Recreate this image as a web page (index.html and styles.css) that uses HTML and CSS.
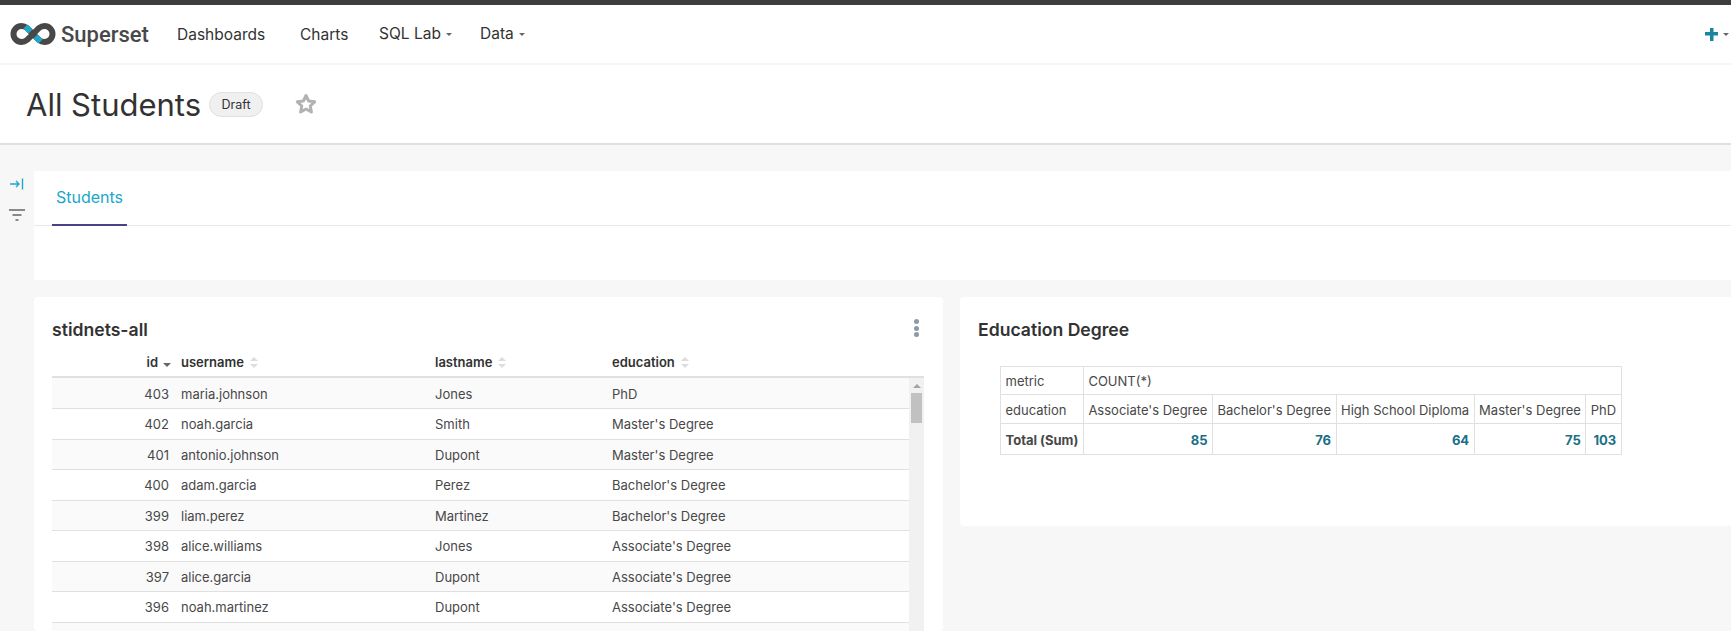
FILE: index.html
```html
<!DOCTYPE html>
<html lang="en">
<head>
    <meta charset="UTF-8">
    <title>All Students</title>
    <link rel="stylesheet" href="styles.css">
</head>
<body>
    <nav class="navbar">
        <a class="brand">
            <svg class="brand-logo" viewBox="0 0 46 24" width="46" height="24">
                <path d="M23 12L29 6Q31.500 4 34.500 4A8 8 0 0 1 34.500 20Q31.500 20 29 18L17 6Q14.500 4 11.500 4A8 8 0 0 0 11.500 20Q14.500 20 17 18Z" fill="none" stroke="#484848" stroke-width="6"/>
                <path d="M15.500 4.500L20.500 9.500M25.500 14.500L30.500 19.500" fill="none" stroke="#20a7c9" stroke-width="6"/>
            </svg>
            <span class="brand-name">Superset</span>
        </a>
        <ul class="nav-links">
            <li class="nav-dashboards">Dashboards</li>
            <li class="nav-charts">Charts</li>
            <li class="nav-sql">SQL Lab<i class="caret"></i></li>
            <li class="nav-data">Data<i class="caret"></i></li>
        </ul>
        <div class="nav-right">
            <span class="plus"></span><i class="caret"></i>
        </div>
    </nav>

    <header class="title-bar">
        <h1>All Students</h1>
        <span class="badge">Draft</span>
        <svg class="star" viewBox="0 0 24 24" width="24" height="24">
            <path d="M12 3.500l2.600 5.500 6.100.8-4.500 4.200 1.200 6-5.400-3-5.400 3 1.200-6-4.500-4.200 6.100-.8z" fill="none" stroke="#b2b2b2" stroke-width="3" stroke-linejoin="round"/>
        </svg>
    </header>

    <div class="content">
        <aside class="filter-rail">
            <svg viewBox="0 0 16 16" width="16" height="16">
                <path d="M1 8h9M7 5l3 3-3 3" fill="none" stroke="#20a7c9" stroke-width="1.400"/>
                <path d="M13.500 2.500v11" stroke="#20a7c9" stroke-width="1.400"/>
            </svg>
            <svg viewBox="0 0 16 16" width="16" height="16">
                <path d="M0 3h16M3.500 8h9M6.500 13h3" stroke="#666" stroke-width="1.400"/>
            </svg>
        </aside>

        <main class="dashboard">
            <section class="tabs-card">
                <div class="tabs">
                    <div class="tab">Students</div>
                </div>
            </section>

            <div class="chart-row">
                <section class="card card-table">
                    <div class="card-head">
                        <h2>stidnets-all</h2>
                        <div class="dots"><i></i><i></i><i></i></div>
                    </div>
                    <table class="head-table">
                        <colgroup><col class="c-id"><col class="c-user"><col class="c-last"><col></colgroup>
                        <tr>
                            <th class="num">id<i class="sort-desc"></i></th>
                            <th>username<i class="sort"></i></th>
                            <th>lastname<i class="sort"></i></th>
                            <th>education<i class="sort"></i></th>
                        </tr>
                    </table>
                    <div class="table-scroll">
                        <table class="data-table">
                            <colgroup><col class="c-id"><col class="c-user"><col class="c-last"><col></colgroup>
                            <tr><td class="num">403</td><td>maria.johnson</td><td>Jones</td><td>PhD</td></tr>
                            <tr><td class="num">402</td><td>noah.garcia</td><td>Smith</td><td>Master's Degree</td></tr>
                            <tr><td class="num">401</td><td>antonio.johnson</td><td>Dupont</td><td>Master's Degree</td></tr>
                            <tr><td class="num">400</td><td>adam.garcia</td><td>Perez</td><td>Bachelor's Degree</td></tr>
                            <tr><td class="num">399</td><td>liam.perez</td><td>Martinez</td><td>Bachelor's Degree</td></tr>
                            <tr><td class="num">398</td><td>alice.williams</td><td>Jones</td><td>Associate's Degree</td></tr>
                            <tr><td class="num">397</td><td>alice.garcia</td><td>Dupont</td><td>Associate's Degree</td></tr>
                            <tr><td class="num">396</td><td>noah.martinez</td><td>Dupont</td><td>Associate's Degree</td></tr>
                            <tr><td class="num"></td><td></td><td></td><td></td></tr>
                        </table>
                        <div class="scrollbar">
                            <i class="scroll-up"></i>
                            <div class="scroll-thumb"></div>
                        </div>
                    </div>
                </section>

                <section class="card card-pivot">
                    <h2>Education Degree</h2>
                    <table class="pivot">
                        <tr class="r-metric"><td>metric</td><td colspan="5">COUNT(*)</td></tr>
                        <tr class="r-edu">
                            <td>education</td>
                            <td>Associate's Degree</td>
                            <td>Bachelor's Degree</td>
                            <td>High School Diploma</td>
                            <td>Master's Degree</td>
                            <td>PhD</td>
                        </tr>
                        <tr class="r-total">
                            <th>Total (Sum)</th>
                            <td>85</td><td>76</td><td>64</td><td>75</td><td>103</td>
                        </tr>
                    </table>
                </section>
            </div>
        </main>
    </div>
</body>
</html>
```

FILE: styles.css
```css
* {
    box-sizing: border-box;
}
body {
    margin: 0;
    height: 631px;
    overflow: hidden;
    background-color: #f7f7f7;
    color: #323232;
    font-family: Inter, 'Noto Sans', Arial, sans-serif;
    font-size: 13px;
}
h1, h2 {
    margin: 0;
}
ul {
    list-style: none;
    margin: 0;
    padding: 0;
}

/* top nav */
.navbar {
    display: flex;
    align-items: center;
    height: 65px;
    padding-left: 10px;
    padding-right: 2px;
    background-color: white;
    border-top: 5px solid #3d3d3d;
    border-bottom: 2px solid #f5f5f5;
}
.brand {
    display: flex;
    align-items: center;
    width: 167px;
}
.brand-name {
    margin-left: 5px;
    color: #484848;
    font-family: Roboto, Arial, sans-serif;
    font-size: 22px;
    font-weight: 500;
}
.nav-links {
    display: flex;
    font-size: 15.500px;
    color: #323232;
}
.nav-links li {
    white-space: nowrap;
}
.nav-dashboards {
    width: 123px;
}
.nav-charts {
    width: 79px;
}
.nav-sql {
    width: 101px;
}
.nav-sql, .nav-data {
    position: relative;
    top: -1px;
}
.caret {
    display: inline-block;
    margin-left: 5px;
    vertical-align: middle;
    border-left: 3.500px solid transparent;
    border-right: 3.500px solid transparent;
    border-top: 3.500px solid #666;
}
.nav-right {
    display: flex;
    align-items: center;
    margin-left: auto;
}
.plus {
    width: 13px;
    height: 13px;
    background:
        linear-gradient(#1985a0, #1985a0) center / 13px 3.500px no-repeat,
        linear-gradient(#1985a0, #1985a0) center / 3.500px 13px no-repeat;
}

/* title */
.title-bar {
    display: flex;
    align-items: center;
    height: 80px;
    padding-left: 26px;
    background-color: white;
    border-bottom: 2px solid #e0e0e0;
}
.title-bar h1 {
    font-size: 31px;
    font-weight: 400;
    color: #323232;
}
.badge {
    margin-left: 8px;
    margin-top: 1px;
    padding: 3px 11.500px;
    background-color: #f0f0f0;
    border: 1px solid #e0e0e0;
    border-radius: 13px;
    font-size: 12.500px;
    line-height: 17px;
}
.star {
    margin-left: 31px;
}

/* dashboard */
.content {
    display: flex;
}
.filter-rail {
    display: flex;
    flex-direction: column;
    align-items: center;
    gap: 15px;
    width: 34px;
    padding-top: 31px;
}
.dashboard {
    flex: 1;
    padding-top: 26px;
}
.tabs-card {
    height: 109px;
    background-color: white;
}
.tabs {
    display: flex;
    height: 55px;
    padding-left: 18px;
    border-bottom: 1px solid #e8e8e8;
}
.tab {
    width: 75px;
    height: 55px;
    padding-top: 17px;
    text-align: center;
    color: #20a7c9;
    font-size: 16px;
    line-height: 19px;
    border-bottom: 2px solid #484389;
}
.chart-row {
    display: flex;
    align-items: flex-start;
    gap: 17px;
    margin-top: 17px;
}
.card {
    background-color: white;
    border-radius: 4px;
}
.card h2 {
    font-size: 17.600px;
    font-weight: 600;
    line-height: 22px;
}
.card-table {
    width: 909px;
    height: 334px;
    padding: 0 19px 0 18px;
}
.card-head {
    display: flex;
    justify-content: space-between;
    height: 47px;
    padding-top: 22px;
}
.dots {
    display: flex;
    flex-direction: column;
    gap: 1.500px;
    width: 10px;
}
.dots i {
    width: 5px;
    height: 5px;
    border-radius: 50%;
    background-color: #8c9aa5;
}
.head-table, .data-table {
    border-collapse: collapse;
    table-layout: fixed;
}
.head-table {
    width: 872px;
    height: 34px;
    border-bottom: 2px solid #e0e0e0;
}
.data-table {
    flex: none;
    width: 857px;
}
.c-id {
    width: 129px;
}
.c-user {
    width: 254px;
}
.c-last {
    width: 177px;
}
.head-table th {
    padding: 3px 0 0 0;
    text-align: left;
    font-weight: 600;
    white-space: nowrap;
}
.head-table th.num {
    text-align: right;
    padding-right: 10px;
}
.sort, .sort-desc {
    display: inline-block;
    vertical-align: middle;
}
.sort {
    position: relative;
    width: 8px;
    height: 11px;
    margin-left: 6px;
}
.sort::before, .sort::after {
    content: "";
    position: absolute;
    left: 0;
    border-left: 4px solid transparent;
    border-right: 4px solid transparent;
}
.sort::before {
    top: 0;
    border-bottom: 4px solid #ddd;
}
.sort::after {
    bottom: 0;
    border-top: 4px solid #ddd;
}
.sort-desc {
    width: 0;
    height: 0;
    margin-left: 5px;
    margin-top: 5px;
    border-left: 4px solid transparent;
    border-right: 4px solid transparent;
    border-top: 4px solid #666;
}
.table-scroll {
    display: flex;
    align-items: flex-start;
    width: 872px;
    height: 253px;
    overflow: hidden;
}
.data-table td {
    height: 30.500px;
    padding: 1px 0 0 0;
    border-bottom: 1px solid #e0e0e0;
    white-space: nowrap;
    color: #484848;
}
.data-table tr:nth-child(odd) {
    background-color: #fafafa;
}
.data-table td.num {
    text-align: right;
    padding-right: 12px;
}
.scrollbar {
    flex: none;
    width: 15px;
    height: 253px;
    padding: 0 2px;
    background-color: #f1f1f1;
}
.scroll-up {
    display: block;
    width: 0;
    margin: 6px auto 5px;
    border-left: 4px solid transparent;
    border-right: 4px solid transparent;
    border-bottom: 4px solid #a3a3a3;
}
.scroll-thumb {
    height: 30px;
    background-color: #c1c1c1;
}

/* pivot */
.card-pivot {
    flex: 1;
    height: 229px;
    padding: 22px 0 0 18px;
    border-radius: 4px 0 0 4px;
}
.pivot {
    margin: 25px 0 0 22px;
    border-collapse: collapse;
    color: #484848;
}
.pivot td, .pivot th {
    padding: 0 4.500px;
    border: 1px solid #e0e0e0;
    white-space: nowrap;
    text-align: left;
}
.pivot .r-edu td, .pivot .r-total th, .pivot .r-total td {
    padding-top: 2px;
}
.r-metric td {
    height: 28px;
}
.r-edu td {
    height: 29px;
}
.r-total th {
    height: 31px;
    font-weight: 700;
}
.pivot .r-total td {
    text-align: right;
    font-weight: 700;
    color: #1a6f86;
}
```
